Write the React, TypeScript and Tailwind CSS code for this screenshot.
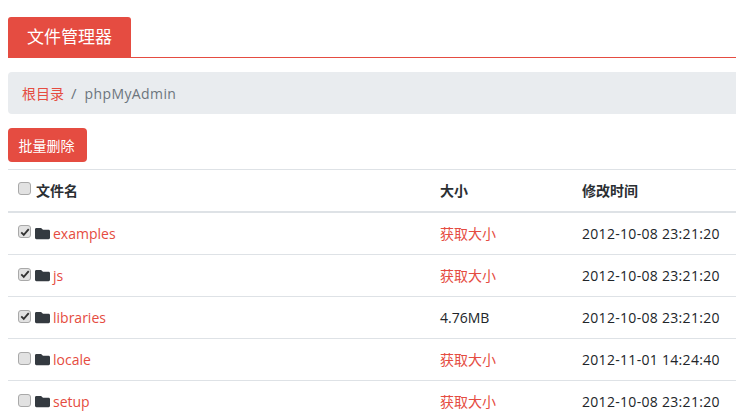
import { FaFolder } from "react-icons/fa";

const files = [
  { name: "examples", size: "获取大小", time: "2012-10-08 23:21:20", checked: true },
  { name: "js", size: "获取大小", time: "2012-10-08 23:21:20", checked: true },
  { name: "libraries", size: "4.76MB", time: "2012-10-08 23:21:20", checked: true },
  { name: "locale", size: "获取大小", time: "2012-11-01 14:24:40", checked: false },
  { name: "setup", size: "获取大小", time: "2012-10-08 23:21:20", checked: false },
];

// old-style grey checkbox, the browser's own one looks different
const Check = ({ checked }: { checked: boolean }) => (
  <span className="mr-[4px] mb-[3px] inline-flex h-[13px] w-[13px] items-center justify-center rounded-[3px] border border-[#a9a9a9] bg-[#e2e2e2]">
    {checked && (
      <svg viewBox="0 0 12 12" className="h-[10px] w-[10px]">
        <path d="M1.5 6.5 L4.5 9.5 L10.5 2.5" fill="none" stroke="#333" strokeWidth="2.2" />
      </svg>
    )}
  </span>
);

export default function App() {
  return (
    <div className="h-[420px] w-[736px] overflow-hidden bg-white text-[14px] text-[#212529] [font-family:'Open_Sans','Noto_Sans_CJK_SC',sans-serif]">
      <div className="w-[780px] px-2 pt-[17px]">
        <div className="flex border-b border-[#e54c41]">
          <div className="flex h-[40px] w-[123px] items-center justify-center rounded-t-[3px] bg-[#e54c41] text-[17px] text-white">
            文件管理器
          </div>
        </div>

        <div className="mt-[14px] flex h-[42px] items-center rounded-[4px] bg-[#e9ecef] px-[14px] text-[#6c757d]">
          <a className="text-[#e54c41]">根目录</a>
          <span className="pl-[7px] pr-[8px] text-[15px]">/</span>
          <span className="tracking-[0.4px]">phpMyAdmin</span>
        </div>

        <button className="mt-[14px] block h-[34px] w-[79px] rounded-[4px] bg-[#e54c41] pr-[2px] text-[14px] text-white">
          批量删除
        </button>

        <table className="mt-[7px] w-full table-fixed border-collapse">
          <colgroup>
            <col className="w-[422px]" />
            <col className="w-[142px]" />
            <col />
          </colgroup>
          <thead>
            <tr className="h-[42px] border-t border-b-2 border-t-[#dee2e6] border-b-[#dee2e6] text-left text-[14px] font-bold text-[#2b2f33]">
              <th className="pl-[10px]">
                <span className="flex items-center">
                  <Check checked={false} />
                  <span className="pl-[1px]">文件名</span>
                </span>
              </th>
              <th className="pl-[10px]">大小</th>
              <th className="pl-[10px]">修改时间</th>
            </tr>
          </thead>
          <tbody>
            {files.map((f, i) => (
              <tr key={f.name} className={i === 0 ? "h-[43px] border-b border-[#dee2e6]" : "h-[42px] border-b border-[#dee2e6]"}>
                <td className="pl-[10px]">
                  <span className="flex items-center">
                    <Check checked={f.checked} />
                    <FaFolder className="mr-[3px] text-[15px] text-[#343a40]" />
                    <a className="text-[#e54c41]">{f.name}</a>
                  </span>
                </td>
                <td className={f.size === "4.76MB" ? "pl-[10px]" : "pl-[10px] text-[#e54c41]"}>{f.size}</td>
                <td className="pl-[10px] tracking-[0.3px]">{f.time}</td>
              </tr>
            ))}
          </tbody>
        </table>
      </div>
    </div>
  );
}
